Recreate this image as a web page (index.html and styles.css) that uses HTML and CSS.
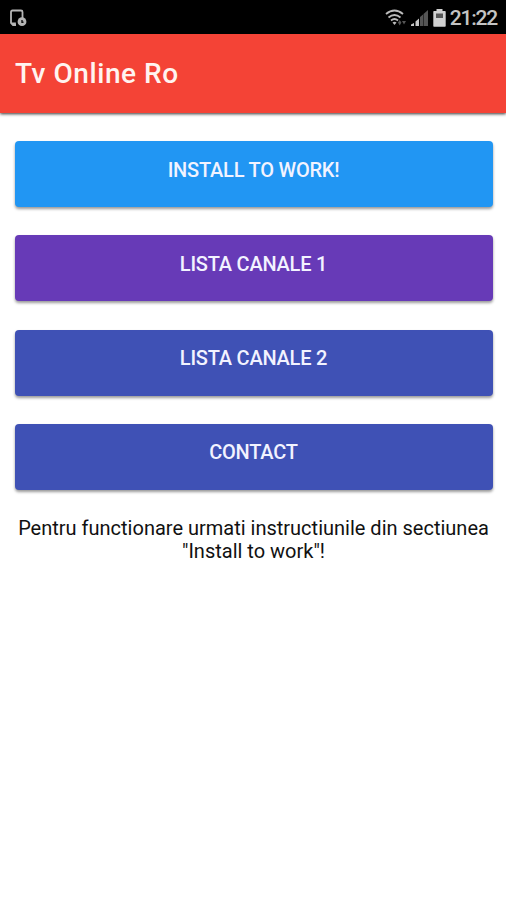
FILE: index.html
```html
<!DOCTYPE html>
<html lang="ro">
<head>
  <meta charset="UTF-8">
  <title>Tv Online Ro</title>
  <link rel="stylesheet" href="styles.css">
</head>
<body>
  <div class="statusbar">
    <svg width="18" height="18" viewBox="0 0 18 18">
      <path d="M7 16H4l-2-2V3q0-1.500 1.500-1.500H12q1.500 0 1.500 1.500v6M2 14.500h4V16" fill="none" stroke="#b5b5b5" stroke-width="1.800"/>
      <circle cx="13" cy="12.700" r="4.400" fill="#b5b5b5"/>
      <path d="M13 11v2.200h1.500" fill="none" stroke="#111" stroke-width="1.400"/>
    </svg>
    <div class="status-right">
      <svg width="22" height="18" viewBox="0 0 22 18">
        <path d="M1 5q8.500-7 17 0M3.500 8.500q6-5 12 0M6 11.500q3.500-3 7 0" fill="none" stroke="#bbb" stroke-width="1.800"/>
        <path d="M7.500 13.500q2-1.500 4 0l-2 2.500z" fill="#bbb"/>
        <path d="M13 13.500l1.700-2.500 1.700 2.500-1.700 3zM17 12h4l-2 3.500z" fill="#555"/>
      </svg>
      <svg width="18" height="18" viewBox="0 0 18 18">
        <path d="M0 17v-1.500L3 14v3zM4.500 17v-4.500L8 9.500V17z" fill="#c8c8c8"/>
        <path d="M9 17V8l3-2.500V17zM12.500 17V5L17 1v16z" fill="#555"/>
      </svg>
      <svg width="13" height="18" viewBox="0 0 13 18">
        <path d="M3.500 0h6v2H12q.7 0 .7.7V17q0 .7-.7.7H1q-.7 0-.7-.7V2.700Q.3 2 1 2h2.500z" fill="#d0d0d0"/>
        <path d="M3 4.500h7V9H3z" fill="#555"/>
      </svg>
      <span class="clock">21:22</span>
    </div>
  </div>

  <header class="toolbar">
    <h1>Tv Online Ro</h1>
  </header>

  <main class="content">
    <button class="btn blue">Install to work!</button>
    <button class="btn purple">Lista canale 1</button>
    <button class="btn indigo">Lista canale 2</button>
    <button class="btn indigo">Contact</button>
    <p class="note">Pentru functionare urmati instructiunile din sectiunea "Install to work"!</p>
  </main>
</body>
</html>
```
FILE: styles.css
```css
body {
  margin: 0;
  min-height: 100vh;
  font-family: Roboto, sans-serif;
  background: #fff;
}

.statusbar {
  display: flex;
  justify-content: space-between;
  align-items: center;
  box-sizing: border-box;
  height: 34px;
  padding: 1px 9px 0;
  background: #000;
}

.status-right {
  display: flex;
  align-items: center;
  gap: 4px;
}

.clock {
  color: #c4c4c4;
  font-size: 21px;
  font-weight: 500;
  letter-spacing: -1.2px;
}

.toolbar {
  display: flex;
  align-items: center;
  height: 79px;
  padding: 0 15px;
  background: #f44336;
  box-shadow: 0 1px 3px rgba(0, 0, 0, 0.8);
}

.toolbar h1 {
  margin: 0;
  color: #fff4f0;
  font-size: 28px;
  font-weight: 500;
  letter-spacing: 0.55px;
}

.content {
  display: flex;
  flex-direction: column;
  gap: 28.3px;
  padding: 28px 13.500px 28px 14.500px;
}

.btn {
  height: 66px;
  padding: 0 0 9px;
  border: none;
  border-radius: 4px;
  color: #f2f3ff;
  font: 500 20px Roboto, sans-serif;
  letter-spacing: -0.22px;
  text-transform: uppercase;
  box-shadow: 0 2px 3px rgba(0, 0, 0, 0.4);
}

.blue {
  background: #2196f3;
}

.purple {
  background: #673ab7;
}

.indigo {
  background: #3f51b5;
}

.note {
  margin: -1px 0 0;
  color: #111;
  font-size: 20px;
  line-height: 23px;
  text-align: center;
}
```
